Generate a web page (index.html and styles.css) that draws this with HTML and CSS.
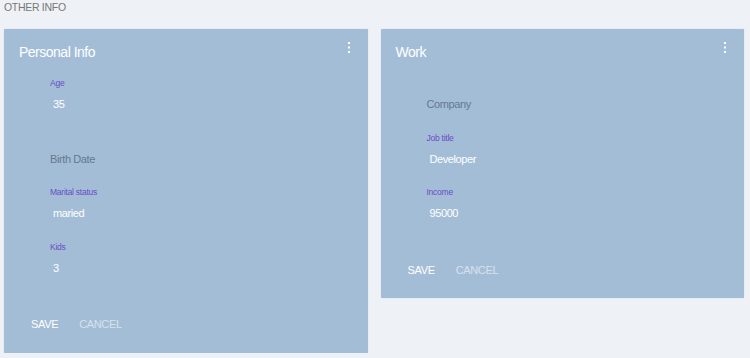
FILE: index.html
```html
<!DOCTYPE html>
<html>
<head lang="en">
    <meta charset="UTF-8">
    <title>Other info</title>
    <link rel="stylesheet" href="styles.css">
</head>
<body>
<div class="page">
    <div class="section-title">OTHER INFO</div>
    <div class="cards">
        <div class="card">
            <div class="card-head">
                <div class="card-title">Personal Info</div>
                <svg class="kebab" width="8" height="13" viewBox="0 0 8 13">
                    <rect x="3" y="1" width="2" height="2" fill="#fff"/>
                    <rect x="3" y="5.5" width="2" height="2" fill="#fff"/>
                    <rect x="3" y="10" width="2" height="2" fill="#fff"/>
                </svg>
            </div>
            <div class="field">
                <div class="label">Age</div>
                <div class="value">35</div>
            </div>
            <div class="field">
                <div class="label"></div>
                <div class="value placeholder">Birth Date</div>
            </div>
            <div class="field">
                <div class="label">Marital status</div>
                <div class="value">maried</div>
            </div>
            <div class="field">
                <div class="label">Kids</div>
                <div class="value">3</div>
            </div>
            <div class="actions">
                <span class="btn save">SAVE</span>
                <span class="btn cancel">CANCEL</span>
            </div>
        </div>
        <div class="card">
            <div class="card-head">
                <div class="card-title">Work</div>
                <svg class="kebab" width="8" height="13" viewBox="0 0 8 13">
                    <rect x="3" y="1" width="2" height="2" fill="#fff"/>
                    <rect x="3" y="5.5" width="2" height="2" fill="#fff"/>
                    <rect x="3" y="10" width="2" height="2" fill="#fff"/>
                </svg>
            </div>
            <div class="field">
                <div class="label"></div>
                <div class="value placeholder">Company</div>
            </div>
            <div class="field">
                <div class="label">Job title</div>
                <div class="value">Developer</div>
            </div>
            <div class="field">
                <div class="label">Income</div>
                <div class="value">95000</div>
            </div>
            <div class="actions">
                <span class="btn save">SAVE</span>
                <span class="btn cancel">CANCEL</span>
            </div>
        </div>
    </div>
</div>
</body>
</html>
```
FILE: styles.css
```css
*{
    margin: 0;
    padding: 0;
}
body{
    background: #eef2f6;
    font-family: "Liberation Sans", Arial, sans-serif;
}
.page{
    padding: 1px 6px 0 4px;
}
.section-title{
    font-size: 10.5px;
    letter-spacing: -0.3px;
    line-height: 12px;
    color: #777;
}
.cards{
    margin-top: 16px;
    display: grid;
    grid-template-columns: 1fr 1fr;
    gap: 13px;
    align-items: start;
}
.card{
    background: #a4bdd7;
    padding: 15px 15px 10.5px;
    border-radius: 1px;
    box-shadow: 0 0 1px rgba(80,110,150,.35);
}
.card-head{
    display: flex;
    justify-content: space-between;
    align-items: flex-start;
    margin-bottom: 15px;
}
.card-title{
    font-size: 14px;
    letter-spacing: -0.5px;
    line-height: 16px;
    color: #fff;
}
.kebab{
    display: block;
    margin-top: -3px;
}
.field{
    margin-left: 31px;
    padding: 3px 0 18.5px;
}
.label{
    height: 10px;
    font-size: 8.5px;
    letter-spacing: -0.25px;
    line-height: 10px;
    color: #6a4cc6;
}
.value{
    margin-top: 9px;
    padding-left: 3px;
    font-size: 11px;
    letter-spacing: -0.4px;
    line-height: 14px;
    color: #fff;
}
.value.placeholder{
    padding-left: 0;
    color: #63798f;
}
.actions{
    margin: 13px 0 0 4px;
    display: flex;
    gap: 5px;
}
.btn{
    padding: 0 8px;
    height: 36px;
    line-height: 36px;
    font-size: 11px;
    letter-spacing: -0.35px;
    cursor: pointer;
}
.save{
    color: #fff;
}
.cancel{
    color: #d6e1ec;
}
```
